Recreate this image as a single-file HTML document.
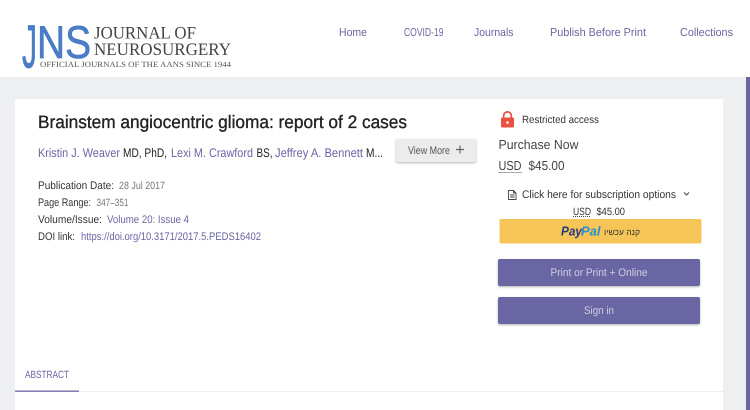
<!DOCTYPE html>
<html lang="en">
<head>
<meta charset="utf-8">
<title>Brainstem angiocentric glioma: report of 2 cases</title>
<style>
html,body{margin:0;padding:0;width:750px;height:410px;overflow:hidden;background:#fff}
svg{display:block;position:absolute;left:0;top:0;text-rendering:geometricPrecision}
text{font-family:"Liberation Sans","Noto Sans CJK JP",sans-serif}
.serif{font-family:"Liberation Serif",serif}
.nav{font-size:11.5px;fill:#6a66a3}
.lab{font-size:11px;fill:#333}
.val{font-size:10.5px;fill:#777}
.lnk{font-size:11px;fill:#6a66a3}
.au{font-size:12.5px;fill:#6a66a3}
.aut{font-size:12.5px;fill:#222}
</style>
</head>
<body>
<svg width="750" height="410" viewBox="0 0 750 410" xmlns="http://www.w3.org/2000/svg">
<defs>
<filter id="s" x="-5%" y="-15%" width="110%" height="140%"><feDropShadow dx="0" dy="1" stdDeviation="1" flood-color="#000" flood-opacity=".3"/></filter>
</defs>
<rect width="750" height="410" fill="#fff"/>
<rect y="77" width="750" height="333" fill="#eeeff1"/>
<rect x="746" y="77" width="4" height="333" fill="#6a66a3"/>
<rect x="15" y="99" width="708" height="311" fill="#fff"/>

<!-- logo -->
<text x="22" y="67.500" font-size="61" fill="#4a7cc6" stroke="#4a7cc6" stroke-width=".7" textLength="15" lengthAdjust="spacingAndGlyphs">J</text>
<text x="37" y="58" font-size="46" fill="#4a7cc6" stroke="#4a7cc6" stroke-width=".7" textLength="54" lengthAdjust="spacingAndGlyphs">NS</text>
<text class="serif" x="94" y="38.500" font-size="17.500" fill="#444" textLength="102" lengthAdjust="spacingAndGlyphs">JOURNAL OF</text>
<text class="serif" x="94" y="55" font-size="17.500" fill="#444" textLength="137" lengthAdjust="spacingAndGlyphs">NEUROSURGERY</text>
<text class="serif" x="40" y="67" font-size="8" fill="#555" textLength="191" lengthAdjust="spacingAndGlyphs">OFFICIAL JOURNALS OF THE AANS SINCE 1944</text>

<!-- nav -->
<text class="nav" x="339" y="36" textLength="28" lengthAdjust="spacingAndGlyphs">Home</text>
<text class="nav" x="404" y="36" textLength="39.500" lengthAdjust="spacingAndGlyphs">COVID-19</text>
<text class="nav" x="474" y="36" textLength="39.500" lengthAdjust="spacingAndGlyphs">Journals</text>
<text class="nav" x="550" y="36" textLength="96" lengthAdjust="spacingAndGlyphs">Publish Before Print</text>
<text class="nav" x="680" y="36" textLength="53" lengthAdjust="spacingAndGlyphs">Collections</text>

<!-- title -->
<text x="38" y="128" font-size="18" fill="#222" stroke="#222" stroke-width=".35" textLength="369" lengthAdjust="spacingAndGlyphs">Brainstem angiocentric glioma: report of 2 cases</text>

<!-- authors -->
<text class="au" x="38" y="157" textLength="82" lengthAdjust="spacingAndGlyphs">Kristin J. Weaver</text>
<text class="aut" x="123" y="157" textLength="44" lengthAdjust="spacingAndGlyphs">MD, PhD,</text>
<text class="au" x="171" y="157" textLength="82" lengthAdjust="spacingAndGlyphs">Lexi M. Crawford</text>
<text class="aut" x="256.500" y="157" textLength="16" lengthAdjust="spacingAndGlyphs">BS,</text>
<text class="au" x="275" y="157" textLength="88" lengthAdjust="spacingAndGlyphs">Jeffrey A. Bennett</text>
<text class="aut" x="366" y="157" textLength="17" lengthAdjust="spacingAndGlyphs">M...</text>

<!-- view more -->
<rect x="396" y="139" width="80" height="23" rx="2" fill="#ececec" filter="url(#s)"/>
<text x="408" y="154" font-size="11" fill="#555" textLength="42" lengthAdjust="spacingAndGlyphs">View More</text>
<path d="M460 145.500v8M456 149.500h8" stroke="#666" stroke-width="1.200" fill="none"/>

<!-- meta -->
<text class="lab" x="38" y="189" textLength="76" lengthAdjust="spacingAndGlyphs">Publication Date:</text>
<text class="val" x="119" y="189" textLength="46" lengthAdjust="spacingAndGlyphs">28 Jul 2017</text>
<text class="lab" x="38" y="206" textLength="53" lengthAdjust="spacingAndGlyphs">Page Range:</text>
<text class="val" x="96.500" y="206" textLength="32" lengthAdjust="spacingAndGlyphs">347–351</text>
<text class="lab" x="38" y="223" textLength="64" lengthAdjust="spacingAndGlyphs">Volume/Issue:</text>
<text class="lnk" x="107" y="223" textLength="82" lengthAdjust="spacingAndGlyphs">Volume 20: Issue 4</text>
<text class="lab" x="38" y="240" textLength="37" lengthAdjust="spacingAndGlyphs">DOI link:</text>
<text class="lnk" x="81" y="240" textLength="180" lengthAdjust="spacingAndGlyphs">https://doi.org/10.3171/2017.5.PEDS16402</text>

<!-- restricted -->
<rect x="501" y="117.500" width="13" height="10" rx="1.500" fill="#e8503f"/>
<path d="M503.700 118v-2.300a3.800 3.800 0 0 1 7.600 0v2.300" stroke="#e8503f" stroke-width="1.700" fill="none"/>
<circle cx="507.500" cy="122.500" r="1.300" fill="#fff"/>
<text x="522" y="123" font-size="10.500" fill="#333" textLength="77" lengthAdjust="spacingAndGlyphs">Restricted access</text>

<text x="498.500" y="149" font-size="13" fill="#444" textLength="80" lengthAdjust="spacingAndGlyphs">Purchase Now</text>
<text x="498.500" y="170" font-size="13" fill="#444" textLength="23" lengthAdjust="spacingAndGlyphs">USD</text>
<line x1="498.500" y1="172.500" x2="522" y2="172.500" stroke="#555" stroke-width="1" stroke-dasharray="1 1"/>
<text x="528.500" y="170" font-size="13" fill="#444" textLength="36" lengthAdjust="spacingAndGlyphs">$45.00</text>

<!-- subscription -->
<path d="M508.500 190.500h5l2.500 2.500v6.500h-7.500z M513.500 190.500v2.500h2.500 M510 195h4.500M510 197h4.500" fill="none" stroke="#444" stroke-width=".9"/>
<text x="522" y="198" font-size="11" fill="#333" textLength="154" lengthAdjust="spacingAndGlyphs">Click here for subscription options</text>
<path d="M684 192.500l2.500 2.500 2.500-2.500" fill="none" stroke="#444" stroke-width="1"/>

<text x="573" y="215" font-size="10.500" fill="#333" textLength="18" lengthAdjust="spacingAndGlyphs">USD</text>
<line x1="573" y1="216.500" x2="591" y2="216.500" stroke="#444" stroke-width="1" stroke-dasharray="1 1"/>
<text x="596.500" y="215" font-size="10.500" fill="#333" textLength="28.500" lengthAdjust="spacingAndGlyphs">$45.00</text>

<!-- paypal -->
<rect x="499.500" y="219" width="202" height="24.500" rx="2" fill="#f6c557"/>
<text x="561" y="235.500" font-size="13" font-weight="700" font-style="italic" fill="#253b80" textLength="21" lengthAdjust="spacingAndGlyphs">Pay</text>
<text x="581" y="235.500" font-size="13" font-weight="700" font-style="italic" fill="#2a8fcb" textLength="19.500" lengthAdjust="spacingAndGlyphs">Pal</text>
<text x="622" y="235" font-size="8.500" fill="#333" text-anchor="middle">קנה עכשיו</text>

<!-- buttons -->
<rect x="498" y="259" width="202" height="27" rx="2" fill="#6a66a3" filter="url(#s)"/>
<text x="550.500" y="276" font-size="11" fill="#d0cfe2" textLength="97" lengthAdjust="spacingAndGlyphs">Print or Print + Online</text>
<rect x="498" y="297" width="202" height="27" rx="2" fill="#6a66a3" filter="url(#s)"/>
<text x="584" y="314" font-size="11" fill="#d0cfe2" textLength="30" lengthAdjust="spacingAndGlyphs">Sign in</text>

<!-- tab -->
<text x="25" y="378" font-size="10.500" fill="#6a66a3" textLength="44" lengthAdjust="spacingAndGlyphs">ABSTRACT</text>
<rect x="15" y="391" width="708" height="1" fill="#eeeff1"/>
<rect x="15" y="390.500" width="64" height="1.300" fill="#6a66a3"/>
</svg>
</body>
</html>
